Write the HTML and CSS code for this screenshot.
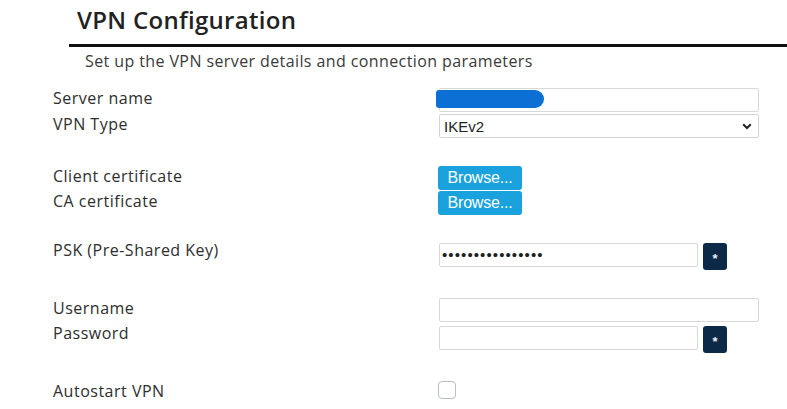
FILE: index.html
```html
<!DOCTYPE html>
<html>
<head>
<meta charset="utf-8">
<link rel="stylesheet" href="styles.css">
</head>
<body>
<div class="page">
  <h1 class="title">VPN Configuration</h1>
  <div class="rule"></div>
  <p class="subtitle">Set up the VPN server details and connection parameters</p>

  <div class="form">
    <div class="group">
      <div class="row">
        <label class="label">Server name</label>
        <div class="control">
          <div class="redact-wrap">
            <input class="input wide" type="text">
            <span class="redact"></span>
          </div>
        </div>
      </div>
      <div class="row">
        <label class="label">VPN Type</label>
        <div class="control">
          <div class="select wide"><span>IKEv2</span>
            <svg class="chev" width="10" height="7" viewBox="0 0 10 7"><path d="M1.2 1.3 L5 5 L8.8 1.3" fill="none" stroke="#222" stroke-width="2"/></svg>
          </div>
        </div>
      </div>
    </div>

    <div class="group certs">
      <div class="row">
        <label class="label">Client certificate</label>
        <div class="control"><button class="browse">Browse...</button></div>
      </div>
      <div class="row">
        <label class="label">CA certificate</label>
        <div class="control"><button class="browse">Browse...</button></div>
      </div>
    </div>

    <div class="group">
      <div class="row">
        <label class="label psk">PSK (Pre-Shared Key)</label>
        <div class="control">
          <div class="input narrow dots">&#8226;&#8226;&#8226;&#8226;&#8226;&#8226;&#8226;&#8226;&#8226;&#8226;&#8226;&#8226;&#8226;&#8226;&#8226;&#8226;</div>
          <button class="star">*</button>
        </div>
      </div>
    </div>

    <div class="group creds">
      <div class="row">
        <label class="label">Username</label>
        <div class="control"><div class="input wide"></div></div>
      </div>
      <div class="row">
        <label class="label psk">Password</label>
        <div class="control">
          <div class="input narrow"></div>
          <button class="star">*</button>
        </div>
      </div>
    </div>

    <div class="group">
      <div class="row">
        <label class="label">Autostart VPN</label>
        <div class="control"><span class="check"></span></div>
      </div>
    </div>
  </div>
</div>
</body>
</html>
```

FILE: styles.css
```css
* { box-sizing: border-box; }
html, body { margin: 0; padding: 0; background: #fff; }
body {
  font-family: "Open Sans", "Noto Sans", sans-serif;
  color: #2b2b2b;
  width: 787px;
  height: 409px;
  overflow: hidden;
}
.page { padding-top: 4px; }
.title {
  margin: 0 0 0 77px;
  font-size: 24px;
  font-weight: 600;
  line-height: 32px;
  color: #222;
  letter-spacing: 0.3px;
}
.rule {
  margin: 8px 0 0 69px;
  height: 3px;
  background: #111;
}
.subtitle {
  margin: 3px 0 0 85px;
  font-size: 16px;
  line-height: 22px;
  color: #3a3a3a;
  letter-spacing: 0.4px;
}
.form {
  margin: 16px 0 0 53px;
  display: flex;
  flex-direction: column;
  gap: 28px;
}
.group { display: flex; flex-direction: column; gap: 2px; }
.group.certs { gap: 1px; }
.group.creds { gap: 4px; }
.row {
  display: grid;
  grid-template-columns: 386px 1fr;
  align-items: start;
}
.label {
  font-size: 16px;
  line-height: 20px;
  color: #2e2e2e;
  letter-spacing: 0.5px;
}
.label.psk { margin-top: -3px; }
.control { display: flex; align-items: flex-start; gap: 5px; }
.input {
  height: 24px;
  border: 1px solid #d8d8d8;
  border-radius: 2px;
  background: #fff;
  font: inherit;
}
.wide { width: 320px; }
.narrow { width: 259px; }
.redact-wrap { position: relative; }
.redact {
  position: absolute;
  left: -3px;
  top: 2px;
  width: 108px;
  height: 18px;
  background: #0b6fd3;
  border-radius: 3px 9px 9px 3px;
}
.select {
  height: 24px;
  border: 1px solid #d4d4d4;
  border-radius: 2px;
  display: flex;
  align-items: center;
  justify-content: space-between;
  padding: 0 6px 0 4px;
  font-family: "Liberation Sans", Arial, sans-serif;
  font-size: 15px;
  color: #222;
}
.chev { display: block; }
.browse {
  height: 24px;
  width: 84px;
  padding: 0;
  margin-left: -1px;
  border: none;
  border-radius: 3px;
  background: #19a2de;
  color: #fff;
  font-family: "Liberation Sans", Arial, sans-serif;
  font-size: 16px;
  letter-spacing: -0.2px;
  text-align: center;
}
.dots {
  font-family: "Liberation Sans", Arial, sans-serif;
  font-size: 15px;
  line-height: 22px;
  padding-left: 2px;
  color: #1e1e1e;
  letter-spacing: 1.1px;
}
.star {
  width: 24px;
  height: 27px;
  border: none;
  border-radius: 3px;
  background: #0c2a48;
  color: #e8f1f8;
  font-family: "Liberation Sans", Arial, sans-serif;
  font-size: 13px;
  font-weight: bold;
  padding: 4px 0 0;
}
.check {
  display: block;
  margin-left: -1px;
  width: 18px;
  height: 18px;
  border: 1px solid #b8bec4;
  border-radius: 4px;
}
```
